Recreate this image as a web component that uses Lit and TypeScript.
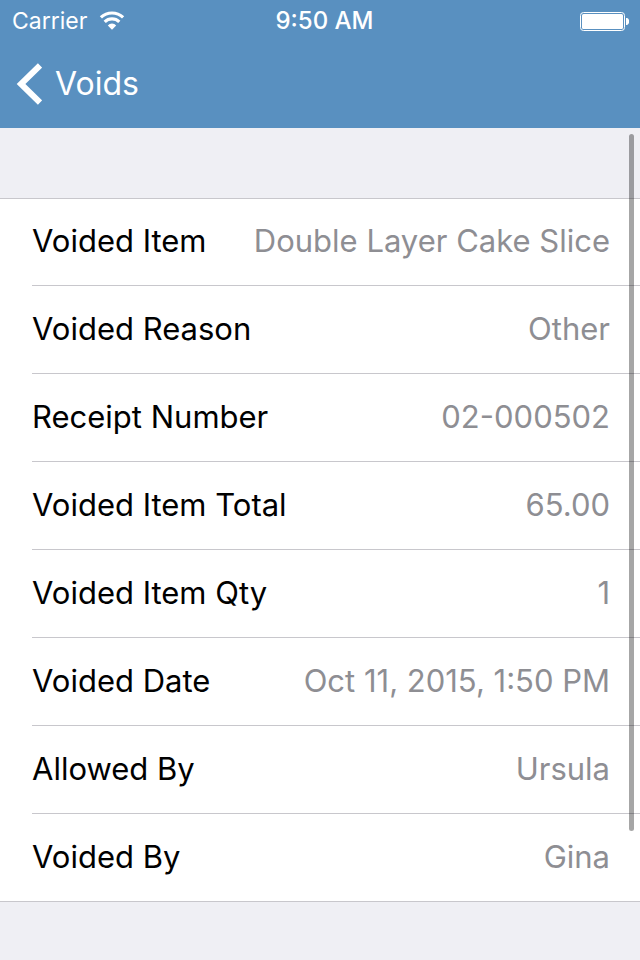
import { LitElement, html, css } from "lit";
import { customElement } from "lit/decorators.js";

interface Field {
  label: string;
  value: string;
}

const FIELDS: Field[] = [
  { label: "Voided Item", value: "Double Layer Cake Slice" },
  { label: "Voided Reason", value: "Other" },
  { label: "Receipt Number", value: "02-000502" },
  { label: "Voided Item Total", value: "65.00" },
  { label: "Voided Item Qty", value: "1" },
  { label: "Voided Date", value: "Oct 11, 2015, 1:50 PM" },
  { label: "Allowed By", value: "Ursula" },
  { label: "Voided By", value: "Gina" },
];

@customElement("status-bar")
class StatusBar extends LitElement {
  static styles = css`
    :host {
      display: grid;
      grid-template-columns: 1fr auto 1fr;
      align-items: center;
      column-gap: 8px;
      padding: 2px 11px 0 12px;
      font-size: 23px;
      line-height: 38px;
    }
    .carrier {
      display: flex;
      align-items: center;
      gap: 12px;
    }
    .clock {
      padding-left: 8px;
      font-size: 24px;
      font-weight: 500;
    }
    .battery {
      justify-self: end;
    }
    svg {
      display: block;
    }
  `;

  render() {
    return html`
      <div class="carrier">
        <span>Carrier</span>
        <svg width="26" height="20" viewBox="0 0 26 20" fill="none" stroke="#fff" stroke-width="3.2">
          <path d="M1.9 6.4a16.2 16.2 0 0 1 22.2 0" />
          <path d="M5.7 10.8a10.6 10.6 0 0 1 14.6 0" />
          <path d="M13 18.8l-4.2-4.4a5.8 5.8 0 0 1 8.4 0z" fill="#fff" stroke="none" />
        </svg>
      </div>
      <span class="clock">9:50 AM</span>
      <svg class="battery" width="49" height="19" viewBox="0 0 49 19">
        <rect x="0.5" y="0.5" width="44" height="18" rx="3" fill="none" stroke="#fff" />
        <rect x="2" y="2" width="41" height="15" rx="1.5" fill="#fff" />
        <path d="M46 6h1.2a4 4 0 0 1 0 7H46z" fill="#fff" />
      </svg>
    `;
  }
}

@customElement("nav-bar")
class NavBar extends LitElement {
  static styles = css`
    :host {
      display: flex;
      align-items: center;
      height: 88px;
      padding: 0 16px;
    }
    .back {
      display: flex;
      align-items: center;
      gap: 13px;
      padding: 0;
      border: 0;
      background: none;
      color: inherit;
      font: inherit;
      font-size: 32px;
      line-height: 44px;
      cursor: pointer;
    }
  `;

  render() {
    return html`
      <button class="back">
        <svg width="26" height="42" viewBox="0 0 26 42" fill="none" stroke="#fff" stroke-width="6">
          <path d="M24 2.5L5 21l19 18.5" />
        </svg>
        <span>Voids</span>
      </button>
    `;
  }
}

@customElement("app-root")
class AppRoot extends LitElement {
  static styles = css`
    :host {
      display: flex;
      flex-direction: column;
      min-height: 100vh;
      background: #efeff4;
      font-family: Inter, "Liberation Sans", sans-serif;
      color: #000;
    }
    header {
      background: #5990c0;
      color: #fff;
    }
    main {
      position: relative;
      flex: 1;
      padding-top: 70px;
    }
    .fields {
      margin: 0;
      padding-left: 32px;
      background: #fff;
      border-top: 1px solid #c8c7cc;
      border-bottom: 1px solid #c8c7cc;
    }
    .row {
      display: flex;
      align-items: center;
      justify-content: space-between;
      gap: 16px;
      padding: 22px 30px 24px 0;
      font-size: 31px;
      line-height: 40px;
    }
    .row + .row {
      padding-top: 23px;
      border-top: 1px solid #c8c7cc;
    }
    dd {
      margin: 0;
      color: #8e8e93;
    }
    .scroll-thumb {
      position: absolute;
      top: 6px;
      bottom: 129px;
      right: 6px;
      width: 5px;
      border-radius: 3px;
      background: rgba(0, 0, 0, 0.35);
    }
  `;

  render() {
    return html`
      <header>
        <status-bar></status-bar>
        <nav-bar></nav-bar>
      </header>
      <main>
        <dl class="fields">
          ${FIELDS.map(
            (f) => html`<div class="row"><dt>${f.label}</dt><dd>${f.value}</dd></div>`
          )}
        </dl>
        <div class="scroll-thumb"></div>
      </main>
    `;
  }
}
